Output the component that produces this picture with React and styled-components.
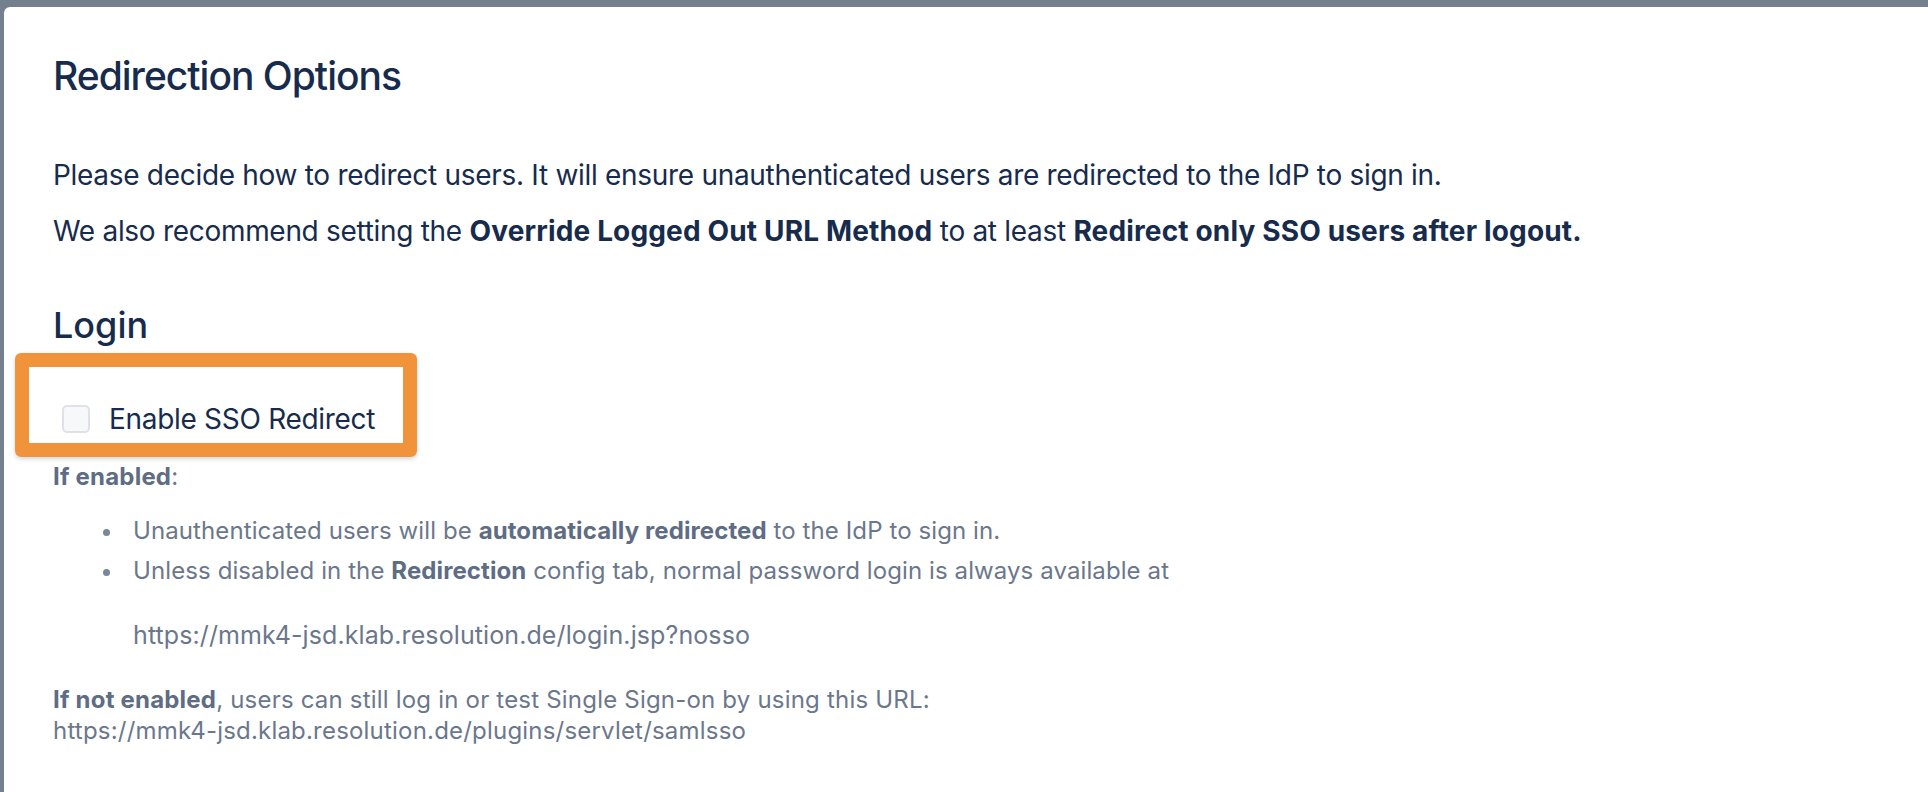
import React from "react";
import styled, { createGlobalStyle } from "styled-components";

const GlobalStyle = createGlobalStyle`
  html, body {
    margin: 0;
    padding: 0;
    background: #75808f;
  }
  body {
    font-family: Inter, "Noto Sans", "Liberation Sans", sans-serif;
    color: #172b4d;
  }
`;

const Backdrop = styled.div`
  min-height: 792px;
  padding: 7px 0 0 4px;
  box-sizing: border-box;
  display: flex;
`;

const Panel = styled.div`
  flex: 1;
  background: #fff;
  border-top-left-radius: 6px;
  padding: 45px 0 40px 49px;
  display: flex;
  flex-direction: column;
  align-items: flex-start;
`;

const Title = styled.h2`
  margin: 0;
  font-size: 39px;
  line-height: 48px;
  font-weight: 500;
  letter-spacing: -1px;
  color: #172b4d;
`;

const Intro = styled.p`
  margin: ${(p) => p.$top}px 0 0;
  font-size: 28px;
  line-height: 40px;
  letter-spacing: -0.3px;
  color: #172b4d;

  b {
    font-weight: 700;
    letter-spacing: 0.15px;
  }
`;

const Section = styled.h3`
  margin: 52px 0 0;
  font-size: 36px;
  line-height: 44px;
  font-weight: 500;
  color: #172b4d;
`;

const Highlight = styled.div`
  margin: 6px 0 0 -38px;
  border: 14px solid #f0933b;
  border-radius: 6px;
  box-shadow: 0 2px 4px rgba(9, 30, 66, 0.18);
  padding: 34px 28px 6px 33px;
`;

const CheckRow = styled.label`
  display: flex;
  align-items: center;
  gap: 19px;
  height: 36px;
  font-size: 28px;
  line-height: 36px;
  letter-spacing: -0.3px;
  color: #172b4d;
  cursor: pointer;
`;

const Box = styled.span`
  width: 28px;
  height: 28px;
  box-sizing: border-box;
  border: 2px solid #dfe1e6;
  border-radius: 5px;
  background: #f7f8fa;
`;

const Help = styled.div`
  margin-top: ${(p) => p.$top}px;
  font-size: 24px;
  line-height: 31px;
  letter-spacing: 0.2px;
  color: #6b778c;

  b {
    font-weight: 700;
    color: #5e6c84;
  }
`;

const List = styled.ul`
  margin: 19px 0 0;
  padding-left: 80px;
  list-style: none;
  font-size: 24px;
  line-height: 40px;
  letter-spacing: 0.1px;
  color: #6b778c;

  b {
    font-weight: 700;
    color: #5e6c84;
  }
`;

const Item = styled.li`
  position: relative;

  &::before {
    content: "";
    position: absolute;
    left: -30px;
    top: 18px;
    width: 7px;
    height: 7px;
    border-radius: 50%;
    background: #7a869a;
  }
`;

const Url = styled.div`
  margin-top: 24px;
  font-size: 25px;
`;

export default function App() {
  return (
    <>
      <GlobalStyle />
      <Backdrop>
        <Panel>
          <Title>Redirection Options</Title>
          <Intro $top={55}>
            Please decide how to redirect users. It will ensure unauthenticated
            users are redirected to the IdP to sign in.
          </Intro>
          <Intro $top={16}>
            We also recommend setting the <b>Override Logged Out URL Method</b>{" "}
            to at least <b>Redirect only SSO users after logout.</b>
          </Intro>

          <Section>Login</Section>
          <Highlight>
            <CheckRow>
              <Box />
              Enable SSO Redirect
            </CheckRow>
          </Highlight>

          <Help $top={4}>
            <b>If enabled</b>:
          </Help>
          <List>
            <Item>
              Unauthenticated users will be <b>automatically redirected</b> to
              the IdP to sign in.
            </Item>
            <Item>
              Unless disabled in the <b>Redirection</b> config tab, normal
              password login is always available at
              <Url>https://mmk4-jsd.klab.resolution.de/login.jsp?nosso</Url>
            </Item>
          </List>
          <Help $top={29}>
            <b>If not enabled</b>, users can still log in or test Single
            Sign-on by using this URL:
            <br />
            https://mmk4-jsd.klab.resolution.de/plugins/servlet/samlsso
          </Help>
        </Panel>
      </Backdrop>
    </>
  );
}
